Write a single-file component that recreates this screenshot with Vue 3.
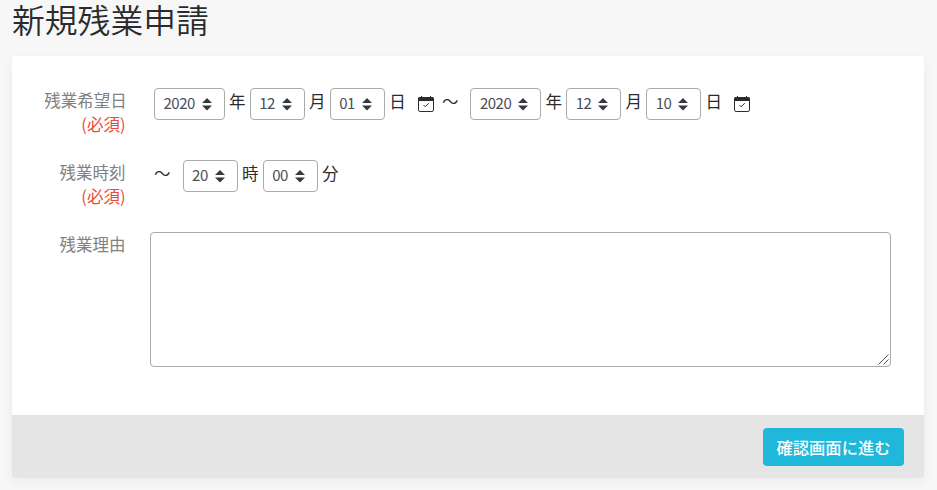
<script setup>
import { ref } from 'vue'

const dateFields = ref([
  { key: 'start', year: '2020', month: '12', day: '01' },
  { key: 'end', year: '2020', month: '12', day: '10' }
])

const units = [
  { name: 'year', label: '年' },
  { name: 'month', label: '月' },
  { name: 'day', label: '日' }
]

const hour = ref('20')
const minute = ref('00')
const reason = ref('')

const range = (from, to) => {
  const list = []
  for (let i = from; i <= to; i++) list.push(String(i).padStart(2, '0'))
  return list
}

const options = {
  year: range(2019, 2022),
  month: range(1, 12),
  day: range(1, 31),
  hour: range(0, 23),
  minute: range(0, 59)
}
</script>

<template>
  <div class="page">
    <h1 class="title">新規残業申請</h1>

    <form class="card" @submit.prevent>
      <div class="card-body">
        <div class="row">
          <div class="label"><span class="long">残業希望日</span><br><span class="required">(必須)</span></div>
          <div class="controls">
            <template v-for="(field, i) in dateFields" :key="field.key">
              <span v-if="i > 0" class="between">～</span>
              <template v-for="unit in units" :key="unit.name">
                <span class="select" :class="{ wide: unit.name === 'year' }">
                  <select v-model="field[unit.name]">
                    <option v-for="o in options[unit.name]" :key="o">{{ o }}</option>
                  </select>
                  <svg class="arrows" viewBox="0 0 4 5"><path d="M2 0L0 2h4zm0 5L0 3h4z" /></svg>
                </span>
                <span class="unit">{{ unit.label }}</span>
              </template>
              <svg class="calendar" viewBox="0 0 16 16">
                <rect x="0.5" y="1.5" width="15" height="14" rx="1.6" fill="none" stroke="currentColor" />
                <path d="M0 5V3a2 2 0 0 1 2-2h1V0h1v1h8V0h1v1h1a2 2 0 0 1 2 2v2z" fill="currentColor" />
                <path d="M5.500 9l1.700 1.700L10.700 7.200" fill="none" stroke="currentColor" />
              </svg>
            </template>
          </div>
        </div>

        <div class="row">
          <div class="label">残業時刻<br><span class="required">(必須)</span></div>
          <div class="controls">
            <span class="until">～</span>
            <span class="select">
              <select v-model="hour">
                <option v-for="o in options.hour" :key="o">{{ o }}</option>
              </select>
              <svg class="arrows" viewBox="0 0 4 5"><path d="M2 0L0 2h4zm0 5L0 3h4z" /></svg>
            </span>
            <span class="unit">時</span>
            <span class="select">
              <select v-model="minute">
                <option v-for="o in options.minute" :key="o">{{ o }}</option>
              </select>
              <svg class="arrows" viewBox="0 0 4 5"><path d="M2 0L0 2h4zm0 5L0 3h4z" /></svg>
            </span>
            <span class="unit">分</span>
          </div>
        </div>

        <div class="row">
          <div class="label">残業理由</div>
          <div class="reason">
            <textarea v-model="reason"></textarea>
            <svg class="grip" viewBox="0 0 11 11">
              <path d="M0.500 10.500L10.500 0.500M5.500 10.500L10.500 5.500" />
            </svg>
          </div>
        </div>
      </div>

      <div class="card-footer">
        <button class="submit" type="submit">確認画面に進む</button>
      </div>
    </form>
  </div>
</template>

<style>
body {
  background: #f7f7f7;
}
</style>

<style scoped>
.page {
  box-sizing: border-box;
  height: 490px;
  padding: 0 13px 0 12px;
  color: #292b2c;
  font-family: "Noto Sans CJK JP", sans-serif;
  font-size: 16.5px;
  line-height: 24px;
}

.title {
  height: 56px;
  margin: 0;
  font-size: 32.8px;
  font-weight: 350;
  line-height: 38px;
}

.card {
  border-radius: 4px;
  background: #fff;
  box-shadow: 0 4px 12px rgba(0, 0, 0, 0.05);
  overflow: hidden;
}

.card-body {
  box-sizing: border-box;
  height: 359px;
  padding: 32px 33px 0 30px;
}

.row {
  display: flex;
  min-height: 72px;
}

.label {
  width: 83.5px;
  flex: none;
  color: #818181;
  text-align: right;
  white-space: nowrap;
}

.long {
  margin-right: -1.3px;
}

.required {
  color: #e74c3c;
}

.controls {
  display: flex;
  align-items: center;
  height: 32px;
  padding-left: 28.5px;
}

.select {
  position: relative;
  width: 55.1px;
  height: 32px;
}

.select.wide {
  width: 70.7px;
}

select {
  box-sizing: border-box;
  display: block;
  width: 100%;
  height: 32px;
  margin: 0;
  padding: 0 0 2px 8.5px;
  border: 1px solid #aaa;
  border-radius: 4px;
  background: #fff;
  color: #495057;
  font-family: inherit;
  font-size: 15px;
  letter-spacing: -0.5px;
  line-height: 24px;
  appearance: none;
}

.arrows {
  position: absolute;
  top: 10px;
  right: 13.2px;
  width: 10px;
  height: 12.5px;
  fill: #343a40;
  pointer-events: none;
}

.unit {
  width: 25px;
  padding-bottom: 6px;
  text-align: center;
}

.calendar {
  width: 16px;
  height: 16px;
  margin-left: 8px;
}

.between {
  width: 36.6px;
  padding-bottom: 6px;
  text-indent: 8px;
}

.until {
  width: 28.6px;
  padding-bottom: 6px;
}

.reason {
  position: relative;
  width: 741px;
  height: 135px;
  margin-left: 24.5px;
}

textarea {
  box-sizing: border-box;
  display: block;
  width: 100%;
  height: 100%;
  margin: 0;
  padding: 6px 12px;
  border: 1px solid #aaa;
  border-radius: 4px;
  font: inherit;
  outline: none;
  resize: none;
}

.grip {
  position: absolute;
  right: 2px;
  bottom: 2px;
  width: 11px;
  height: 11px;
  fill: none;
  stroke: #555;
  pointer-events: none;
}

.card-footer {
  display: flex;
  align-items: center;
  justify-content: flex-end;
  box-sizing: border-box;
  height: 62.5px;
  padding: 1px 20px 0 0;
  background: #e5e5e5;
}

.submit {
  width: 141px;
  height: 38px;
  padding: 1px 0 0;
  border: 0;
  border-radius: 4px;
  background: #1fb8da;
  color: #fff;
  font-family: inherit;
  font-size: 16.3px;
  font-weight: 500;
  line-height: 24px;
}
</style>
